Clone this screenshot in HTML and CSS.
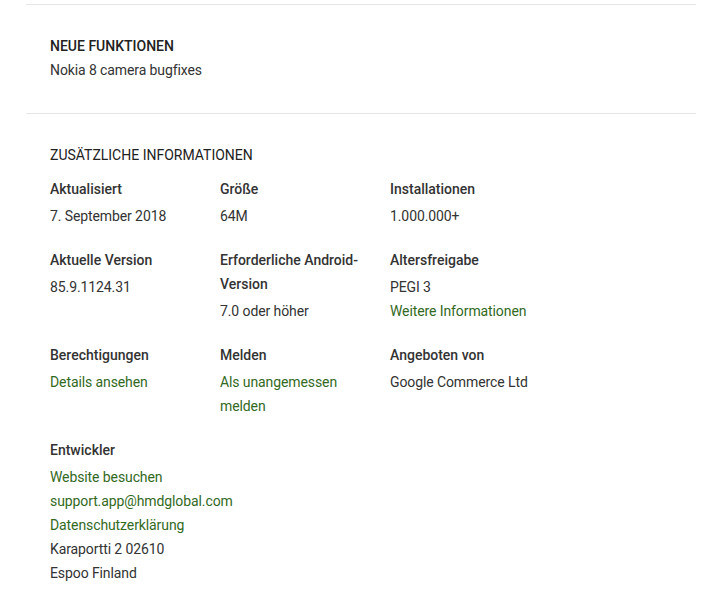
FILE: index.html
```html
<!DOCTYPE html>
<html lang="de">
<head>
    <meta charset="UTF-8">
    <meta name="viewport" content="width=device-width, initial-scale=1.0">
    <title>App-Details</title>
    <link rel="stylesheet" href="styles.css">
</head>
<body>
    <div class="details">
        <div class="section whats-new">
            <h2 class="section-title">NEUE FUNKTIONEN</h2>
            <div class="section-body">Nokia 8 camera bugfixes</div>
        </div>

        <div class="section info">
            <h2 class="section-title light">ZUSÄTZLICHE INFORMATIONEN</h2>
            <div class="info-grid">
                <div class="info-item">
                    <div class="info-label">Aktualisiert</div>
                    <div class="info-value">7. September 2018</div>
                </div>
                <div class="info-item">
                    <div class="info-label">Größe</div>
                    <div class="info-value">64M</div>
                </div>
                <div class="info-item">
                    <div class="info-label">Installationen</div>
                    <div class="info-value">1.000.000+</div>
                </div>

                <div class="info-item">
                    <div class="info-label">Aktuelle Version</div>
                    <div class="info-value">85.9.1124.31</div>
                </div>
                <div class="info-item">
                    <div class="info-label">Erforderliche Android-Version</div>
                    <div class="info-value">7.0 oder höher</div>
                </div>
                <div class="info-item">
                    <div class="info-label">Altersfreigabe</div>
                    <div class="info-value">
                        <div>PEGI 3</div>
                        <a href="#">Weitere Informationen</a>
                    </div>
                </div>

                <div class="info-item">
                    <div class="info-label">Berechtigungen</div>
                    <div class="info-value"><a href="#">Details ansehen</a></div>
                </div>
                <div class="info-item">
                    <div class="info-label">Melden</div>
                    <div class="info-value"><a href="#">Als unangemessen melden</a></div>
                </div>
                <div class="info-item">
                    <div class="info-label">Angeboten von</div>
                    <div class="info-value">Google Commerce Ltd</div>
                </div>

                <div class="info-item wide">
                    <div class="info-label">Entwickler</div>
                    <div class="info-value">
                        <div><a href="#">Website besuchen</a></div>
                        <div><a href="#">support.app@hmdglobal.com</a></div>
                        <div><a href="#">Datenschutzerklärung</a></div>
                        <div>Karaportti 2 02610</div>
                        <div>Espoo Finland</div>
                    </div>
                </div>
            </div>
        </div>
    </div>
</body>
</html>
```

FILE: styles.css
```css
* {
    margin: 0;
    padding: 0;
    box-sizing: border-box;
}

body {
    background: #fff;
    font-family: Roboto, "Liberation Sans", Arial, sans-serif;
    font-size: 14px;
    color: #333;
}

.details {
    margin: 4px 24px 0 26px;
}

.section {
    border-top: 1px solid #e6e6e6;
    padding: 29px 24px 31px;
}

.section-title {
    font-size: 14px;
    font-weight: 500;
    line-height: 24px;
    color: #212121;
}

.section-title.light {
    font-weight: 400;
    margin-bottom: 10px;
}

.section-body {
    line-height: 24px;
    letter-spacing: -0.1px;
}

.info-grid {
    display: grid;
    grid-template-columns: 170px 170px 170px;
    row-gap: 20px;
}

.info-item.wide {
    grid-column: 1 / 3;
}

.info-label {
    font-weight: 500;
    line-height: 24px;
    color: #333;
    padding-right: 8px;
}

.info-value {
    margin-top: 3px;
    line-height: 24px;
    padding-right: 8px;
    letter-spacing: -0.1px;
}

a {
    color: #33691e;
    text-decoration: none;
}
```
